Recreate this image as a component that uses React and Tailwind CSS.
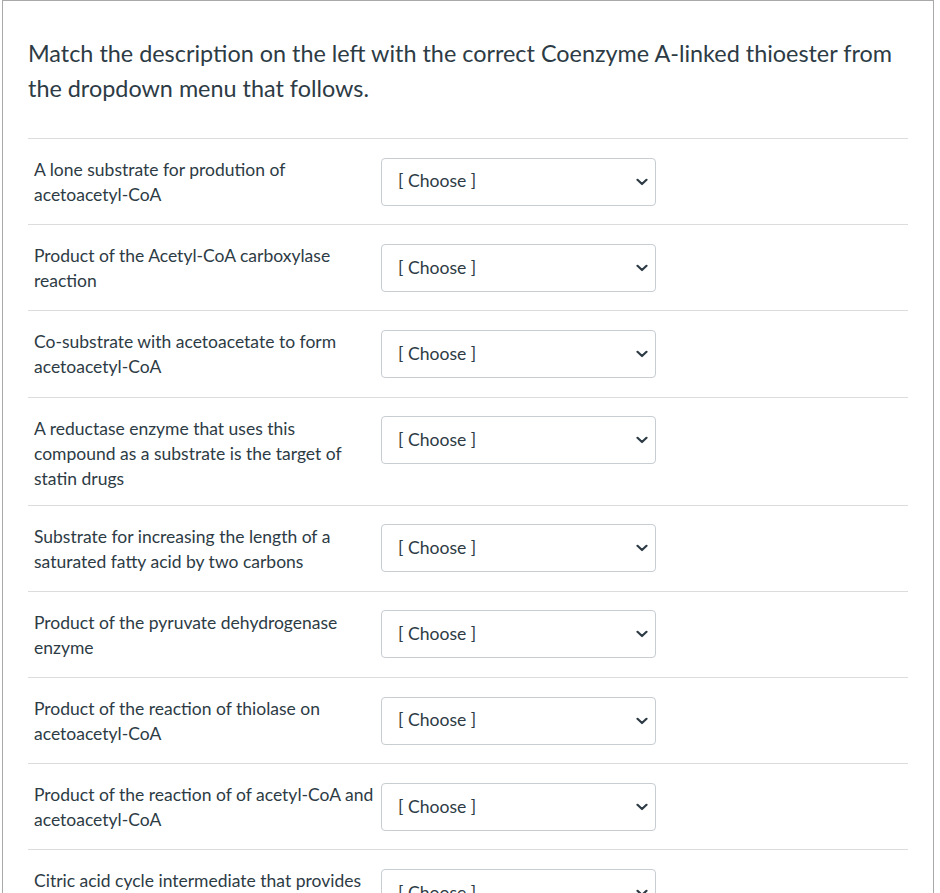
import React from 'react';

const rows = [
  ['A lone substrate for prodution of', 'acetoacetyl-CoA'],
  ['Product of the Acetyl-CoA carboxylase', 'reaction'],
  ['Co-substrate with acetoacetate to form', 'acetoacetyl-CoA'],
  ['A reductase enzyme that uses this', 'compound as a substrate is the target of', 'statin drugs'],
  ['Substrate for increasing the length of a', 'saturated fatty acid by two carbons'],
  ['Product of the pyruvate dehydrogenase', 'enzyme'],
  ['Product of the reaction of thiolase on', 'acetoacetyl-CoA'],
  ['Product of the reaction of of acetyl-CoA and', 'acetoacetyl-CoA'],
  ['Citric acid cycle intermediate that provides', 'the carbons for ketone body synthesis'],
];

const ChooseSelect = () => (
  <div className="w-[275px] h-[48px] border border-[#c7cdd1] rounded-[4px] bg-white flex items-center justify-between pl-[16px] pr-[7px] text-[17.6px] text-[#2d3b45]">
    <span>[ Choose ]</span>
    <svg width="12" height="8" viewBox="0 0 12 8" fill="none">
      <path d="M1.5 1.8 L6 6 L10.5 1.8" stroke="#2d3b45" strokeWidth="2.2" strokeLinecap="round" strokeLinejoin="round" />
    </svg>
  </div>
);

export default function App() {
  return (
    <div className="w-[940px] h-[893px] overflow-hidden bg-white" style={{ fontFamily: 'Lato, "Open Sans", sans-serif' }}>
      <div className="ml-[2px] w-[932px] border border-[#a9a9a9] border-b-0 px-[25px] pt-[35px] text-[#2d3b45]">
        <p className="text-[23.4px] leading-[35px]">
          Match the description on the left with the correct Coenzyme A-linked thioester from the dropdown menu that follows.
        </p>
        <div className="mt-[32px] border-t border-[#dcdcdc]">
          {rows.map((lines, i) => (
            <div key={i} className="flex items-start border-b border-[#dcdcdc]">
              <div className="w-[347px] pl-[6px] pt-[18px] pb-[14px] text-[17.5px] leading-[25px]">
                {lines.map((l, j) => (
                  <div key={j} className="whitespace-nowrap">{l}</div>
                ))}
              </div>
              <div className="pl-[6px] py-[18.6px]">
                <ChooseSelect />
              </div>
            </div>
          ))}
        </div>
      </div>
    </div>
  );
}
